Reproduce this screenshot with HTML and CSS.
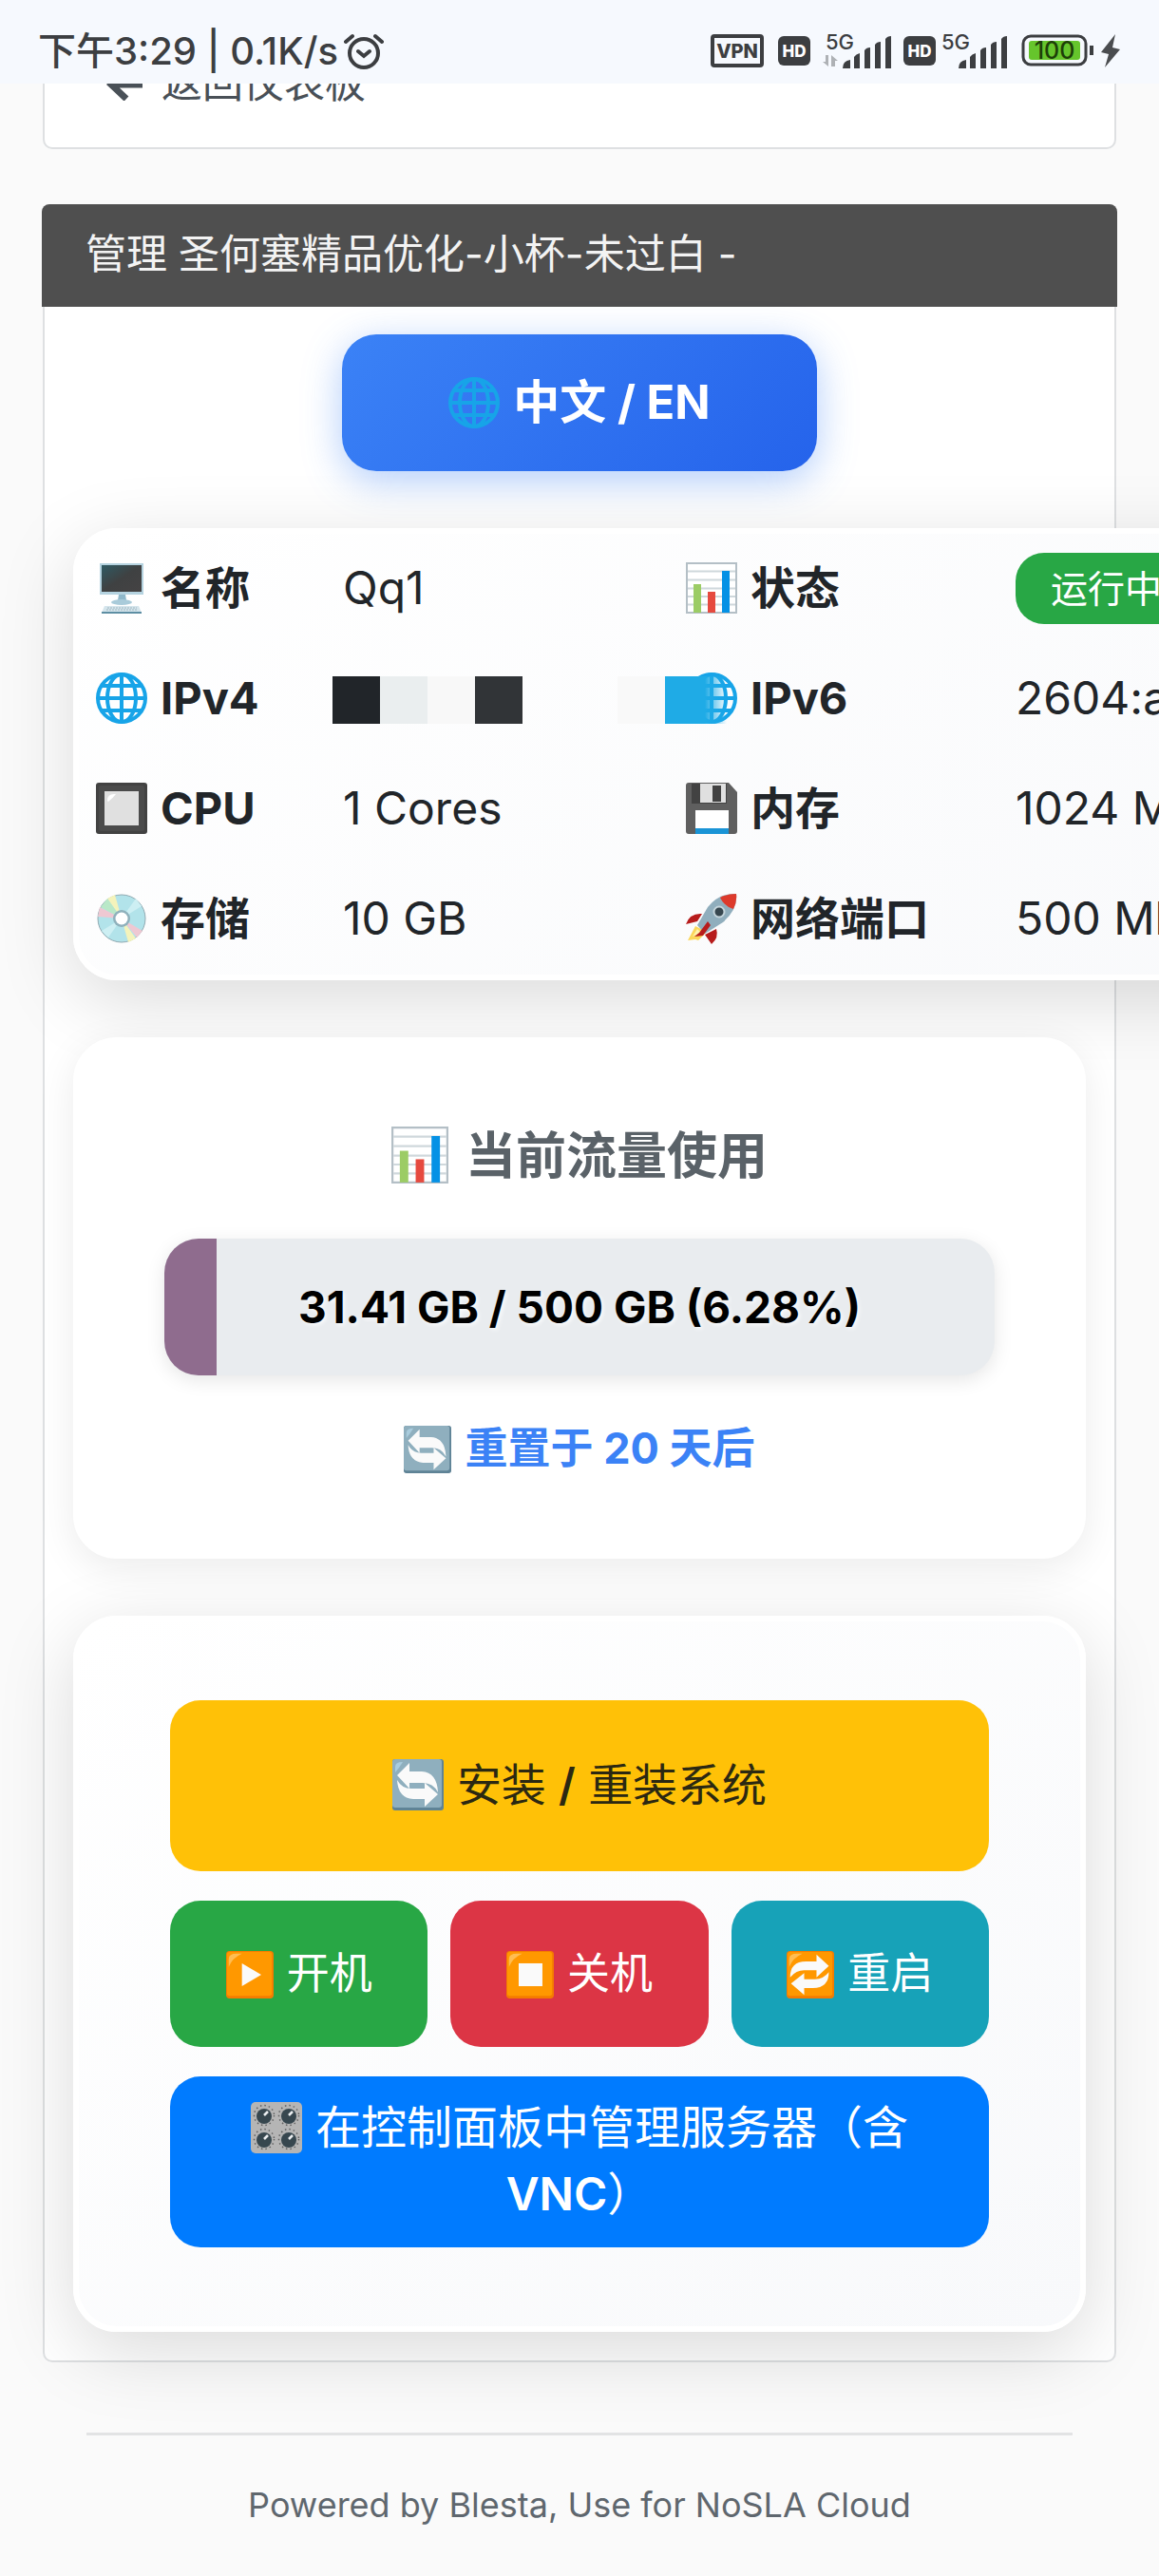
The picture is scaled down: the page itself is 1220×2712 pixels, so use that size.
FILE: index.html
```html
<!DOCTYPE html>
<html lang="zh-CN">
<head>
<meta charset="utf-8">
<meta name="viewport" content="width=device-width, initial-scale=1">
<title>管理 圣何塞精品优化-小杯-未过白</title>
<link rel="stylesheet" href="styles.css">
</head>
<body>
<svg class="sprite" width="0" height="0" aria-hidden="true">
  <defs>
    <linearGradient id="screen" x1="0" y1="0" x2="1" y2="1"><stop offset="0" stop-color="#2f5a63"/><stop offset=".5" stop-color="#3f4142"/><stop offset="1" stop-color="#454344"/></linearGradient>
    <symbol id="globe" viewBox="0 0 54 54">
      <g fill="none" stroke="#17a4e8" stroke-width="4"><circle cx="27" cy="27" r="25"/><ellipse cx="27" cy="27" rx="15" ry="25"/><path d="M27 2v50M2 27h50M6 14h42M6 40h42"/></g>
    </symbol>
    <symbol id="desktop" viewBox="0 0 54 54">
      <path d="M4 1h46v33H4z" fill="#b5d3e0"/><path d="M6 3h42v28H6z" fill="url(#screen)"/>
      <path d="M24 34h7l1 6H23z" fill="#8fb8ca"/><ellipse cx="27" cy="42" rx="11" ry="3" fill="#a9cbda"/>
      <path d="M9 46h36l3 7H6z" fill="#d5e5ec"/><path d="M6 52h42v2H6z" fill="#5d8ea3"/><path d="M12 48h31M11 50h33" stroke="#9fb7c2" stroke-dasharray="2 1"/>
    </symbol>
    <symbol id="chart" viewBox="0 0 54 54">
      <path d="M1 1h52v52H1z" fill="#fff" stroke="#b4bfc6" stroke-width="2"/>
      <path d="M2 9.500h50M2 18.500h50M2 27.500h50M2 36h50M2 44.500h50" stroke="#cfd8dc" stroke-width="2"/>
      <path d="M8 23h8v30H8z" fill="#9ccc65"/><path d="M23 31h8v22h-8z" fill="#e64a3f"/><path d="M38 9h8v44h-8z" fill="#0491e5"/>
    </symbol>
    <symbol id="button" viewBox="0 0 54 54">
      <rect width="54" height="54" rx="3" fill="#424242"/><rect x="3" y="3" width="48" height="48" rx="2" fill="#4b4b4b"/><rect x="9" y="9" width="36" height="36" fill="#e0e0e0"/>
      <path d="M12 19q0-7 7-7h2q-3 4-8 8z" fill="#fff"/>
    </symbol>
    <symbol id="disc" viewBox="0 0 54 54">
      <circle cx="27" cy="27" r="25" fill="#b2e3ea" stroke="#90a9b1"/>
      <path d="M27 27 12 6l8-4z" fill="#f4f3bb"/><path d="M27 27 5 15l7-9z" fill="#b9e8c8"/><path d="M27 27 2 25l2-10z" fill="#eec8d2"/>
      <path d="M27 27 42 48l-8 4z" fill="#f4f3bb"/><path d="M27 27 49 40l-6 7z" fill="#eec8d2"/>
      <path d="M27 27 42 6l6 8z" fill="#cdeff3"/><path d="M27 27 6 40l7 7z" fill="#cdeff3"/>
      <circle cx="27" cy="27" r="9" fill="#8fb1bc"/><circle cx="27" cy="27" r="6.500" fill="#fff"/>
    </symbol>
    <symbol id="floppy" viewBox="0 0 54 54">
      <path d="M3 0h42l9 10v41a3 3 0 0 1-3 3H3a3 3 0 0 1-3-3V3a3 3 0 0 1 3-3z" fill="#5f5f5f"/>
      <path d="M6 1h37v21H6z" fill="#424242"/><path d="M15 1h27v20H15z" fill="#e0e0e0"/><path d="M28 3h9v17h-9z" fill="#424242"/>
      <path d="M10 29h35v20H10z" fill="#fff"/><path d="M10 48h35v6H10z" fill="#1a94d6"/>
    </symbol>
    <symbol id="rocket" viewBox="0 0 54 54">
      <path d="M10 35 2 50l8-1 3 1 9-9z" fill="#fbd75b"/><path d="M12 38 7 46l9-4z" fill="#fff3ae"/>
      <path d="M17 22Q4 21 0 33l12-3zM32 38q3 9-5 16l-7-10z" fill="#b71c1c"/>
      <path d="M53 1Q35 0 23 15L12 34l8 9 19-12Q55 17 53 1z" fill="#90aebd"/>
      <path d="M53 1Q43 1 36 5q4 9 14 12 4-8 3-16z" fill="#dd3a2c"/>
      <circle cx="35" cy="20" r="5.500" fill="#37474f" stroke="#c5d5dc" stroke-width="2"/>
      <path d="m23 30-9 12-5 4 9-1 8-11z" fill="#b71c1c"/>
    </symbol>
    <symbol id="refresh" viewBox="0 0 54 54">
      <rect width="54" height="54" rx="3" fill="#5f8396"/><rect width="52" height="51" rx="3" fill="#8fafbe"/><path d="M3 14V8q0-5 8-5L7 9z" fill="#a9ccdd"/>
      <path d="M5 17 18 4v9h13q16 1 17 22-5-10-16-10H18v6z" fill="#fafafa"/><path d="M48 37 34 50v-8H22Q6 41 5 22q5 9 15 9h14v-6z" fill="#fafafa"/>
    </symbol>
    <symbol id="tile" viewBox="0 0 54 54">
      <rect width="54" height="54" rx="4" fill="#f57c00"/><rect x="1" y="1" width="51" height="50" rx="3" fill="#ff9800"/><path d="M3 18V9q0-6 9-6h6Q7 8 3 18z" fill="#ffbd52"/>
    </symbol>
    <symbol id="play" viewBox="0 0 54 54"><use href="#tile"/><path d="m18 14 22 13-22 13z" fill="#fafafa"/></symbol>
    <symbol id="stop" viewBox="0 0 54 54"><use href="#tile"/><path d="M14 14h27v26H14z" fill="#fafafa"/></symbol>
    <symbol id="repeat" viewBox="0 0 54 54"><use href="#tile"/>
      <path d="M4 30q0-18 18-18h12V4l14 13-14 13v-8H20q-9 0-16 8z" fill="#fafafa"/><path d="M48 24q0 18-18 18H20v8L5 37l15-12v7h12q10 0 16-8z" fill="#fafafa"/>
    </symbol>
    <symbol id="knob" viewBox="0 0 26 26"><circle cx="13" cy="13" r="10.500" fill="none" stroke="#616161" stroke-width="1.500" stroke-dasharray="1.500 3"/><circle cx="13" cy="14" r="8" fill="#37474f"/><path d="m13 13 4-4" stroke="#eceff1" stroke-width="2.500"/></symbol>
    <symbol id="knobs" viewBox="0 0 54 54"><rect width="54" height="54" rx="5" fill="#b5b5b5"/><use href="#knob" x="1" y="1" width="26" height="26"/><use href="#knob" x="27" y="1" width="26" height="26"/><use href="#knob" x="1" y="26" width="26" height="26"/><use href="#knob" x="27" y="26" width="26" height="26"/></symbol>
    <symbol id="signal" viewBox="0 0 52 34"><path d="M0 34q0-8 8-9v9zM12 22q2-3 6-4v16h-6zM23 15q2-3 6-3v22h-6zM34 9q2-3 6-3v28h-6zM45 3q2-3 6-3v34h-6z" fill="#3c3e41"/></symbol>
  </defs>
</svg>

<header class="statusbar">
  <div class="statusbar-time">
    <span>下午3:29 | 0.1K/s</span>
    <svg width="42" height="38" viewBox="0 0 42 38" fill="none" stroke="#3c3e41" stroke-linecap="round" stroke-width="4"><circle cx="21" cy="21" r="15"/><path d="m15 19 6 5 6-5M2 9l7-6M40 9l-7-6"/></svg>
  </div>
  <svg class="statusbar-icons" width="434" height="40" viewBox="0 0 434 40" role="img" aria-label="VPN, HD, 5G, 100">
    <rect x="2" y="4" width="52" height="31" rx="2" fill="none" stroke="#3c3e41" stroke-width="4"/>
    <text class="status-bold" x="28" y="27" font-size="20">VPN</text>
    <rect x="71" y="4" width="34" height="31" rx="6" fill="#3c3e41"/>
    <text class="status-hd" x="88" y="26" font-size="17">HD</text>
    <text class="status-net" x="136" y="18" font-size="22">5G</text>
    <path d="M118 31l6 5V24h-3v7zM127 36V24l7 6h-3v6z" fill="#aeb1b5"/>
    <use href="#signal" x="139" y="4" width="52" height="34"/>
    <rect x="203" y="4" width="34" height="31" rx="6" fill="#3c3e41"/>
    <text class="status-hd" x="220" y="26" font-size="17">HD</text>
    <text class="status-net" x="258" y="18" font-size="22">5G</text>
    <use href="#signal" x="261" y="4" width="52" height="34"/>
    <rect x="329" y="4" width="66" height="30" rx="8" fill="none" stroke="#3c3e41" stroke-width="3"/>
    <rect x="335" y="9" width="54" height="20" rx="3" fill="#66c52c"/>
    <text class="status-net battery" x="362" y="28" font-size="25">100</text>
    <path d="M401 14v10" stroke="#3c3e41" stroke-width="4"/>
    <path d="M426 2l-15 19 8 2-4 14 16-19-8-2z" fill="#4a4c4f"/>
  </svg>
</header>

<main class="page">
  <nav class="panel back-panel">
    <a class="back-link" href="#dashboard">
      <svg width="38" height="38" viewBox="0 0 38 38" fill="none" stroke="#495057" stroke-width="7"><path d="M38 21H5M22 4 5 21l16 15"/></svg>
      返回仪表板
    </a>
  </nav>

  <section class="panel">
    <h1 class="panel-title">管理 圣何塞精品优化-小杯-未过白 -</h1>
    <div class="panel-body">
      <button class="lang-button" type="button"><svg class="icon"><use href="#globe"/></svg>中文 / EN</button>

      <div class="card info-card">
        <table class="info-table">
          <colgroup><col class="col-label"><col class="col-value"><col class="col-label-wide"><col class="col-rest"></colgroup>
          <tr>
            <th scope="row"><svg class="icon"><use href="#desktop"/></svg>名称</th><td>Qq1</td>
            <th scope="row"><svg class="icon"><use href="#chart"/></svg>状态</th><td><span class="badge">运行中</span></td>
          </tr>
          <tr>
            <th scope="row"><svg class="icon"><use href="#globe"/></svg>IPv4</th>
            <td class="masked"><span class="mosaic"><i class="m1"></i><i class="m2"></i><i class="m3"></i><i class="m4"></i><i></i><i></i><i class="m5"></i><i class="m6"></i></span></td>
            <th scope="row"><svg class="icon"><use href="#globe"/></svg>IPv6</th><td>2604:a</td>
          </tr>
          <tr>
            <th scope="row"><svg class="icon"><use href="#button"/></svg>CPU</th><td>1 Cores</td>
            <th scope="row"><svg class="icon"><use href="#floppy"/></svg>内存</th><td>1024 MB</td>
          </tr>
          <tr>
            <th scope="row"><svg class="icon"><use href="#disc"/></svg>存储</th><td>10 GB</td>
            <th scope="row"><svg class="icon"><use href="#rocket"/></svg>网络端口</th><td>500 Mbps</td>
          </tr>
        </table>
      </div>

      <section class="card usage-card">
        <h2 class="usage-title"><svg class="icon icon-lg"><use href="#chart"/></svg>当前流量使用</h2>
        <div class="meter">
          <div class="meter-fill" style="width: 6.28%"></div>
          <span class="meter-text">31.41 GB / 500 GB (6.28%)</span>
        </div>
        <p class="usage-reset"><svg class="icon icon-sm"><use href="#refresh"/></svg>重置于 20 天后</p>
      </section>

      <section class="card actions-card">
        <button class="action action-main install" type="button"><svg class="icon"><use href="#refresh"/></svg>安装 <b>/</b> 重装系统</button>
        <div class="action-row">
          <button class="action start" type="button"><svg class="icon icon-sm"><use href="#play"/></svg>开机</button>
          <button class="action stop" type="button"><svg class="icon icon-sm"><use href="#stop"/></svg>关机</button>
          <button class="action restart" type="button"><svg class="icon icon-sm"><use href="#repeat"/></svg>重启</button>
        </div>
        <button class="action action-main manage" type="button"><svg class="icon"><use href="#knobs"/></svg>在控制面板中管理服务器（含 <b>VNC</b>）</button>
      </section>
    </div>
  </section>

  <footer class="footer">Powered by Blesta, Use for NoSLA Cloud</footer>
</main>
</body>
</html>
```
FILE: styles.css
```css
* { box-sizing: border-box; }

body {
  margin: 0;
  background: #fafafa;
  color: #212529;
  font-family: Inter, "Noto Sans CJK SC", sans-serif;
  font-size: 47px;
  line-height: 70px;
}

button { font: inherit; border: 0; cursor: pointer; }
.sprite { display: block; }

.icon {
  width: 54px;
  height: 54px;
  margin-right: 14px;
  vertical-align: -10px;
}
.icon-sm { width: 50px; height: 50px; }
.icon-lg { width: 60px; height: 60px; margin-right: 18px; }

/* Phone status bar, drawn over the scrolled page */
.statusbar {
  position: fixed;
  inset: 0 0 auto;
  z-index: 10;
  height: 88px;
  padding: 20px 38px 0 40px;
  display: flex;
  justify-content: space-between;
  align-items: center;
  background: #f6f9fe;
  color: #3c3e41;
  font-size: 40px;
  font-weight: 500;
  line-height: 40px;
}
.statusbar-time { display: flex; align-items: center; gap: 6px; white-space: nowrap; }
.statusbar-icons { overflow: visible; }
.statusbar-icons text { text-anchor: middle; fill: #3c3e41; font-family: Inter, sans-serif; }
.statusbar-icons .status-bold { font-weight: 800; }
.statusbar-icons .status-hd { font-weight: 800; fill: #fff; }
.statusbar-icons .status-net { font-weight: 500; }
.statusbar-icons .battery { fill: #1d3f08; }

.page { padding: 0 45px; overflow-x: clip; }

.panel {
  background: #fff;
  border: 2px solid #dee0e2;
  border-radius: 10px;
}
.back-panel { padding: 50px 65px 33px; margin-bottom: 58px; }
.back-link {
  display: flex;
  align-items: center;
  gap: 20px;
  color: #495057;
  font-size: 43px;
  text-decoration: none;
}

.panel-title {
  margin: -2px -3px 0;
  padding: 17px 46px 21px;
  background: #4f4f4f;
  border-radius: 8px 8px 0 0;
  color: #f3f3f3;
  font-size: 43px;
  font-weight: 400;
}
.panel-body {
  display: flex;
  flex-direction: column;
  gap: 60px;
  padding: 29px 30px 30px;
}

.lang-button {
  align-self: center;
  height: 144px;
  padding: 0 112px;
  border-radius: 36px;
  background: linear-gradient(135deg, #3b82f6, #2563eb);
  box-shadow: 0 10px 40px rgba(59, 130, 246, .4);
  color: #fff;
  font-size: 49px;
  font-weight: 700;
  white-space: nowrap;
}

.card {
  border: 6px solid #fff;
  border-radius: 46px;
  background: linear-gradient(145deg, #fff, #f8f9fb);
  box-shadow: 0 20px 80px rgba(0, 0, 0, .15);
}

.info-card { align-self: flex-start; }
.info-table { width: 1430px; table-layout: fixed; border-collapse: collapse; }
.info-table tr { height: 116px; }
.info-table th, .info-table td { padding: 0 18px 2px; text-align: left; white-space: nowrap; }
.info-table th { font-weight: 700; }
.info-table td { font-size: 48px; }
.col-label { width: 260px; }
.col-value { width: 361px; }
.col-label-wide { width: 347px; }
.badge {
  display: inline-block;
  padding: 0 37px;
  border-radius: 30px;
  background: #28a745;
  color: #fff;
  font-size: 39px;
  line-height: 75px;
}
.masked { position: relative; }
.mosaic {
  position: absolute;
  left: 7px;
  top: 34px;
  display: grid;
  grid-template-columns: repeat(7, 50px) 65px;
  height: 50px;
}
.m1 { background: #212529; }
.m2 { background: #eaeeef; }
.m3 { background: #f8f8f8; }
.m4 { background: #313437; }
.m5 { background: #f9f9f9; }
.m6 { background: linear-gradient(90deg, #1fabe6 42px, rgba(31, 171, 230, 0)); }

.usage-card {
  padding: 84px 90px 75px;
  background: #fff;
  box-shadow: 0 10px 40px rgba(0, 0, 0, .08);
  text-align: center;
}
.usage-title { margin: 0; color: #5a6268; font-size: 53px; font-weight: 700; }
.meter {
  position: relative;
  display: grid;
  align-items: center;
  height: 144px;
  margin: 52px 0 42px;
  overflow: hidden;
  border-radius: 36px;
  background: #e9ecef;
  box-shadow: 0 5px 20px rgba(0, 0, 0, .1);
}
.meter-fill, .meter-text { grid-area: 1 / 1; }
.meter-fill { height: 100%; background: #8f6c8e; }
.meter-text { color: #000; font-size: 46px; font-weight: 700; text-shadow: 2px 2px 4px rgba(255, 255, 255, .8); }
.usage-reset { margin: 0; color: #3b82f6; font-size: 45px; font-weight: 700; }

.actions-card { display: grid; gap: 31px; padding: 83px 96px; }
.action-row { display: grid; grid-template-columns: repeat(3, 1fr); gap: 24px; }
.action { min-height: 154px; padding: 0; border-radius: 32px; color: #fff; font-size: 45px; white-space: nowrap; }
.action b { font-weight: 600; }
.action-main { min-height: 180px; padding: 0 48px 2px; font-size: 47px; white-space: normal; }
.install { background: #ffc107; color: #2b2812; }
.start { background: #28a745; }
.stop { background: #dc3545; }
.restart { background: #17a2b8; }
.manage { background: #007bff; font-size: 48px; }

.footer {
  margin: 74px 46px 0;
  padding: 38px 0;
  border-top: 3px solid #e2e3e4;
  color: #5f676e;
  font-size: 36px;
  text-align: center;
}
```
